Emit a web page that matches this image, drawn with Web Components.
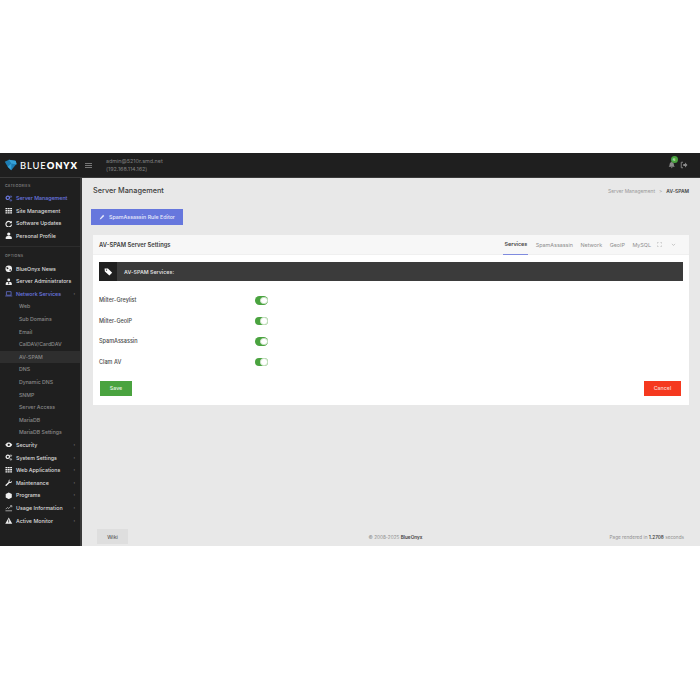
<!DOCTYPE html>
<html><head><meta charset="utf-8"><title>BlueOnyx</title>
<style>
html,body{margin:0;padding:0;background:#fff;font-family:"Inter","Liberation Sans",sans-serif}
body{height:700px;overflow:hidden;display:flex;flex-direction:column}
.top-space{height:153px;flex:none}
</style></head><body>
<div class="top-space"></div>
<bx-app></bx-app>
<script>
const ICONS={
cogs:'<circle cx="6" cy="6" r="3.6" fill="none" stroke="currentColor" stroke-width="2.6"/><circle cx="12.5" cy="3.5" r="1.6" fill="none" stroke="currentColor" stroke-width="1.4"/><circle cx="12.5" cy="11.5" r="1.6" fill="none" stroke="currentColor" stroke-width="1.4"/>',
th:'<path d="M1 2h4v3H1zM6 2h4v3H6zM11 2h4v3h-4zM1 6.500h4v3H1zM6 6.500h4v3H6zM11 6.500h4v3h-4zM1 11h4v3H1zM6 11h4v3H6zM11 11h4v3h-4z" fill="currentColor"/>',
refresh:'<path d="M13 5.500A6 6 0 1 0 14 9.500" fill="none" stroke="currentColor" stroke-width="2.400"/><path d="M14.500 1.500v5.500h-5.500z" fill="currentColor"/>',
user:'<circle cx="8" cy="4.500" r="3.500" fill="currentColor"/><path d="M1.500 15v-2.500C1.500 10 3.500 8.500 5.500 8.500h5c2 0 4 1.500 4 4V15z" fill="currentColor"/>',
globe:'<circle cx="8" cy="8" r="7" fill="currentColor"/><path d="M3.500 4.500l3 1 1 2.500-2 1-2.500-2zM10 9l3 .5-1.500 3.500-2-1z" fill="#1f1f1f"/>',
admin:'<circle cx="8" cy="4" r="3" fill="currentColor"/><path d="M1.500 15v-3c0-2 1.500-3.500 3.500-3.500h6c2 0 3.500 1.500 3.500 3.500v3z" fill="currentColor"/><path d="M7.300 8.500h1.400l.5 4-1.200 1.500-1.200-1.500z" fill="#1f1f1f"/>',
laptop:'<path d="M3 3.500h10v7.500H3z" fill="none" stroke="currentColor" stroke-width="1.500"/><path d="M.5 12h15v1.500H.5z" fill="currentColor"/>',
eye:'<path d="M.5 8C3 4 5.500 3 8 3s5 1 7.500 5C13 12 10.500 13 8 13S3 12 .5 8z" fill="currentColor"/><circle cx="8" cy="8" r="2.400" fill="#1f1f1f"/>',
wrench:'<path d="M15 4.500a4 4 0 0 1-5.500 3.800L3.500 14.500a1.500 1.500 0 0 1-2.200-2.200l6.300-5.900A4 4 0 0 1 11.500 1L9 3.500l.8 2.300 2.300.8L14.700 4z" fill="currentColor"/>',
box:'<path d="M8 .8l6.500 3.400v7.600L8 15.200l-6.500-3.400V4.200z" fill="currentColor"/>',
chart:'<path d="M1 14.500h14" stroke="currentColor" stroke-width="1.300" fill="none"/><path d="M1.500 11l3.500-3.500 3 2 5.500-5.500" stroke="currentColor" stroke-width="1.300" fill="none"/><path d="M11 3.500h3.500V7" stroke="currentColor" stroke-width="1.300" fill="none"/>',
warn:'<path d="M8 1l7.500 13.500H.5z" fill="currentColor"/><path d="M7.200 5.500h1.600v5H7.200zM7.200 11.500h1.600v1.500H7.200z" fill="#1f1f1f"/>',
pencil:'<path d="M11 2l3 3-8.500 8.500L2 14.500l1-3.500z" fill="currentColor"/>',
tag:'<path d="M1 2.500h6l7.500 7.500-5 5L1.500 8z" fill="currentColor"/><circle cx="4.500" cy="5.500" r="1.200" fill="#222"/>',
bell:'<path d="M8 1a1 1 0 0 1 1 1v.6c2.300.5 3.500 2.400 3.500 4.400 0 3 1 4 2 5H1.500c1-1 2-2 2-5 0-2 1.200-3.900 3.500-4.400V2a1 1 0 0 1 1-1zM6.300 13.500h3.400a1.700 1.700 0 0 1-3.400 0z" fill="currentColor"/>',
logout:'<path d="M6 2.500H2.500v11H6" stroke="currentColor" stroke-width="1.800" fill="none"/><path d="M6.500 6h3.500V3l5 5-5 5v-3H6.500z" fill="currentColor"/>',
expand:'<path d="M1.500 5V1.500H5M11 1.500h3.500V5M14.500 11v3.500H11M5 14.500H1.500V11" stroke="currentColor" stroke-width="1.400" fill="none"/>',
chev:'<path d="M3 6l5 5 5-5" stroke="currentColor" stroke-width="1.600" fill="none"/>'
};
const svg=(n,s)=>`<svg width="${s}" height="${s}" viewBox="0 0 16 16" style="display:block;flex:none" aria-hidden="true">${ICONS[n]}</svg>`;
const def=(name,build)=>customElements.define(name,class extends HTMLElement{constructor(){super();this.attachShadow({mode:'open'})}connectedCallback(){this.shadowRoot.innerHTML=build(this)}});

def('bx-nav',el=>{const icon=el.getAttribute('icon');const sub=el.hasAttribute('sub');const active=el.hasAttribute('active');const caret=el.hasAttribute('caret');const cur=el.hasAttribute('current');
return `<style>:host{display:flex;align-items:center;height:12.6px;box-sizing:border-box;padding-left:${sub?19:5}px;padding-right:5px;font-size:${sub?5.2:5.3}px;font-weight:500;white-space:nowrap;color:${active?'#6b78e0':sub?'#8a8a8a':'#dcdcdc'};background:${cur?'#2e2e2e':'transparent'}}
.i{width:11px;flex:none;color:${active?'#6b78e0':'#eee'}}
.t{flex:1}.c{font-size:4px;color:#888;line-height:1}</style>
${icon?`<span class="i">${svg(icon,7.5)}</span>`:''}<span class="t"><slot></slot></span>${caret?'<span class="c">‹</span>':''}`});

def('bx-sidehead',()=>`<style>:host{display:flex;align-items:center;height:13px;padding-left:5px;font-size:3.6px;letter-spacing:.3px;color:#8d8d8d;font-weight:500}</style><slot></slot>`);

def('bx-sidebar',()=>`<style>:host{display:flex;flex-direction:column;width:82px;flex:none;background:#1f1f1f;box-sizing:border-box;padding-top:1px;border-right:2px solid #383838}
.sec{padding-bottom:4px;border-bottom:1px solid #2c2c2c;margin-bottom:2px}</style>
<div class="sec"><slot name="a"></slot></div><slot name="b"></slot>`);

def('bx-topbar',()=>`<style>:host{display:flex;align-items:center;height:24px;flex:none;background:#1f1f1f;border-bottom:1px solid #3a3a3a;box-sizing:content-box;color:#aaa}
.logo{display:flex;align-items:center;width:85px;flex:none;padding-left:4px;box-sizing:border-box;gap:3px;color:#fff;font-size:9.4px;font-weight:700;letter-spacing:.9px;font-family:"Lato","Inter",sans-serif}
.logo b{font-weight:500}.logo i{font-style:normal;font-weight:800}
.menu{width:7px;height:5px;border-top:1px solid #777;border-bottom:1px solid #777;position:relative;box-sizing:border-box;margin-right:14px;flex:none}
.menu::after{content:"";position:absolute;left:0;right:0;top:1px;height:1px;background:#777}
.who{font-size:5.4px;line-height:8px;color:#808080;flex:1;font-weight:400}
.right{display:flex;align-items:center;gap:5px;padding-right:12px;color:#8a8a8a}
.bell{position:relative;display:block}
.badge{position:absolute;left:3px;top:-5px;width:7px;height:7px;border-radius:50%;background:#4aa33f;color:#fff;font-size:4px;line-height:7px;text-align:center}</style>
<div class="logo"><svg width="13" height="12" viewBox="0 0 16 14" aria-hidden="true"><path d="M1 3l5-2.500 8 1 1.500 4L9 13.500 4.500 9z" fill="#1d7db3"/><path d="M6 .5l3 4.500 6.500 1.500-1-4.500zM4.500 9L9 5l0 8.500z" fill="#35a2d8"/></svg><span><b>BLUE</b><i>ONYX</i></span></div>
<span class="menu"></span>
<div class="who">admin@5210r.smd.net<br>(192.168.114.162)</div>
<div class="right"><span class="bell">${svg('bell',7.5)}<span class="badge">6</span></span>${svg('logout',8)}</div>`);

def('bx-toggle',()=>`<style>:host{display:block;width:13px;height:8.500px;border-radius:5px;background:#4aa33f;position:relative}
span{position:absolute;right:.5px;top:.5px;width:7.500px;height:7.500px;border-radius:50%;background:#fff;box-sizing:border-box;border:.5px solid #cfe5cb}</style><span></span>`);

def('bx-row',el=>`<style>:host{display:grid;grid-template-columns:156px 13px;align-items:center;height:20.6px;font-size:5.5px;color:#4a4a4a;font-weight:500}</style><span><slot></slot></span><bx-toggle></bx-toggle>`);

def('bx-btn',el=>{const c=el.getAttribute('color')||'#4aa33f';const w=el.getAttribute('w')||'32';const h=el.getAttribute('h')||'15';return `<style>:host{display:flex;align-items:center;justify-content:center;gap:4px;box-sizing:border-box;width:${w}px;height:${h}px;background:${c};color:${el.getAttribute('fg')||'#e9f3e7'};font-size:5.3px;font-weight:500;white-space:nowrap}</style><slot></slot>`});

def('bx-tabs',()=>`<style>:host{display:flex;align-items:stretch;height:100%;font-size:5.4px;color:#8f8f8f;font-weight:400}
span{display:flex;align-items:center;margin-left:7.500px;height:19px}
.a{color:#444;font-weight:600;border-bottom:1.500px solid #7f8bdf;height:18.500px;margin-left:0;padding:0 1px}
.ic{color:#999;margin-left:6px}</style>
<span class="a">Services</span><span>SpamAssassin</span><span>Network</span><span>GeoIP</span><span>MySQL</span><span class="ic">${svg('expand',5)}</span><span class="ic" style="margin-left:9px;margin-right:13px">${svg('chev',5)}</span>`);

def('bx-card',()=>`<style>:host{display:block;background:#fff;margin:0 11px 0 11px;height:170px;box-sizing:border-box}
.h{display:flex;align-items:center;justify-content:space-between;height:20px;background:#f7f7f7;border-bottom:1px solid #f0f0f0;box-sizing:border-box;padding-left:6px;font-size:5.8px;font-weight:600;color:#3d3d3d}
.bar{display:flex;align-items:center;height:19px;background:#3b3b3b;margin:7px 6px 9px;color:#ddd;font-size:5.3px;font-weight:600}
.tg{width:18px;height:19px;background:#202020;display:flex;align-items:center;justify-content:center;color:#fff;margin-right:7px;flex:none}
.rows{padding-left:6px}
.ft{display:flex;justify-content:space-between;padding:8.500px 8px 0 7px}</style>
<div class="h"><span>AV-SPAM Server Settings</span><bx-tabs></bx-tabs></div>
<div class="bar"><span class="tg">${svg('tag',9)}</span><span>AV-SPAM Services:</span></div>
<div class="rows"><bx-row>Milter-Greylist</bx-row><bx-row>Milter-GeoIP</bx-row><bx-row>SpamAssassin</bx-row><bx-row>Clam AV</bx-row></div>
<div class="ft"><bx-btn color="#4aa33f" w="32" h="15">Save</bx-btn><bx-btn color="#f5391f" fg="#fbd9d2" w="37" h="15">Cancel</bx-btn></div>`);

def('bx-main',()=>`<style>:host{display:flex;flex-direction:column;flex:1;min-width:0;background:#e8e8e8}
.tt{display:flex;align-items:center;justify-content:space-between;height:25px;padding:0 11px 0 11px;margin-bottom:6px}
.ti{font-size:7.300px;color:#3d3d3d;font-weight:500}
.bc{font-size:4.900px;color:#999}.bc b{color:#444;font-weight:600;margin-left:4px}.bc i{font-style:normal;margin-left:4px}
.act{padding:0 0 10px 9px}
.foot{margin-top:auto;display:flex;align-items:center;justify-content:space-between;padding:0 16px 2px 15px;font-size:4.700px;color:#8f8f8f;height:15px;position:relative}
.foot b{color:#444;font-weight:600}
.wiki{width:31px;height:15px;background:#dedede;color:#444;display:flex;align-items:center;justify-content:center;font-size:5.300px}
.c{position:absolute;left:0;right:0;text-align:center;padding-left:9px}</style>
<div class="tt"><span class="ti">Server Management</span><span class="bc">Server Management<i>&gt;</i><b>AV-SPAM</b></span></div>
<div class="act"><bx-btn color="#6677dd" fg="#e6e9fa" w="92" h="16">${svg('pencil',6)}SpamAssassin Rule Editor</bx-btn></div>
<bx-card></bx-card>
<div class="foot"><span class="wiki">Wiki</span><span class="c">© 2008-2025 <b>BlueOnyx</b></span><span>Page rendered in <b>1.2708</b> seconds</span></div>`);

def('bx-app',()=>`<style>:host{display:flex;flex-direction:column;height:393px;flex:none}
.b{display:flex;flex:1;min-height:0}</style>
<bx-topbar></bx-topbar>
<div class="b"><bx-sidebar>
<bx-sidehead slot="a">CATEGORIES</bx-sidehead>
<bx-nav slot="a" icon="cogs" active>Server Management</bx-nav>
<bx-nav slot="a" icon="th">Site Management</bx-nav>
<bx-nav slot="a" icon="refresh">Software Updates</bx-nav>
<bx-nav slot="a" icon="user">Personal Profile</bx-nav>
<bx-sidehead slot="b">OPTIONS</bx-sidehead>
<bx-nav slot="b" icon="globe">BlueOnyx News</bx-nav>
<bx-nav slot="b" icon="admin">Server Administrators</bx-nav>
<bx-nav slot="b" icon="laptop" active caret>Network Services</bx-nav>
<bx-nav slot="b" sub>Web</bx-nav>
<bx-nav slot="b" sub>Sub Domains</bx-nav>
<bx-nav slot="b" sub>Email</bx-nav>
<bx-nav slot="b" sub>CalDAV/CardDAV</bx-nav>
<bx-nav slot="b" sub current>AV-SPAM</bx-nav>
<bx-nav slot="b" sub>DNS</bx-nav>
<bx-nav slot="b" sub>Dynamic DNS</bx-nav>
<bx-nav slot="b" sub>SNMP</bx-nav>
<bx-nav slot="b" sub>Server Access</bx-nav>
<bx-nav slot="b" sub>MariaDB</bx-nav>
<bx-nav slot="b" sub>MariaDB Settings</bx-nav>
<bx-nav slot="b" icon="eye" caret>Security</bx-nav>
<bx-nav slot="b" icon="cogs" caret>System Settings</bx-nav>
<bx-nav slot="b" icon="th" caret>Web Applications</bx-nav>
<bx-nav slot="b" icon="wrench" caret>Maintenance</bx-nav>
<bx-nav slot="b" icon="box" caret>Programs</bx-nav>
<bx-nav slot="b" icon="chart" caret>Usage Information</bx-nav>
<bx-nav slot="b" icon="warn" caret>Active Monitor</bx-nav>
</bx-sidebar><bx-main></bx-main></div>`);
</script>
</body></html>
